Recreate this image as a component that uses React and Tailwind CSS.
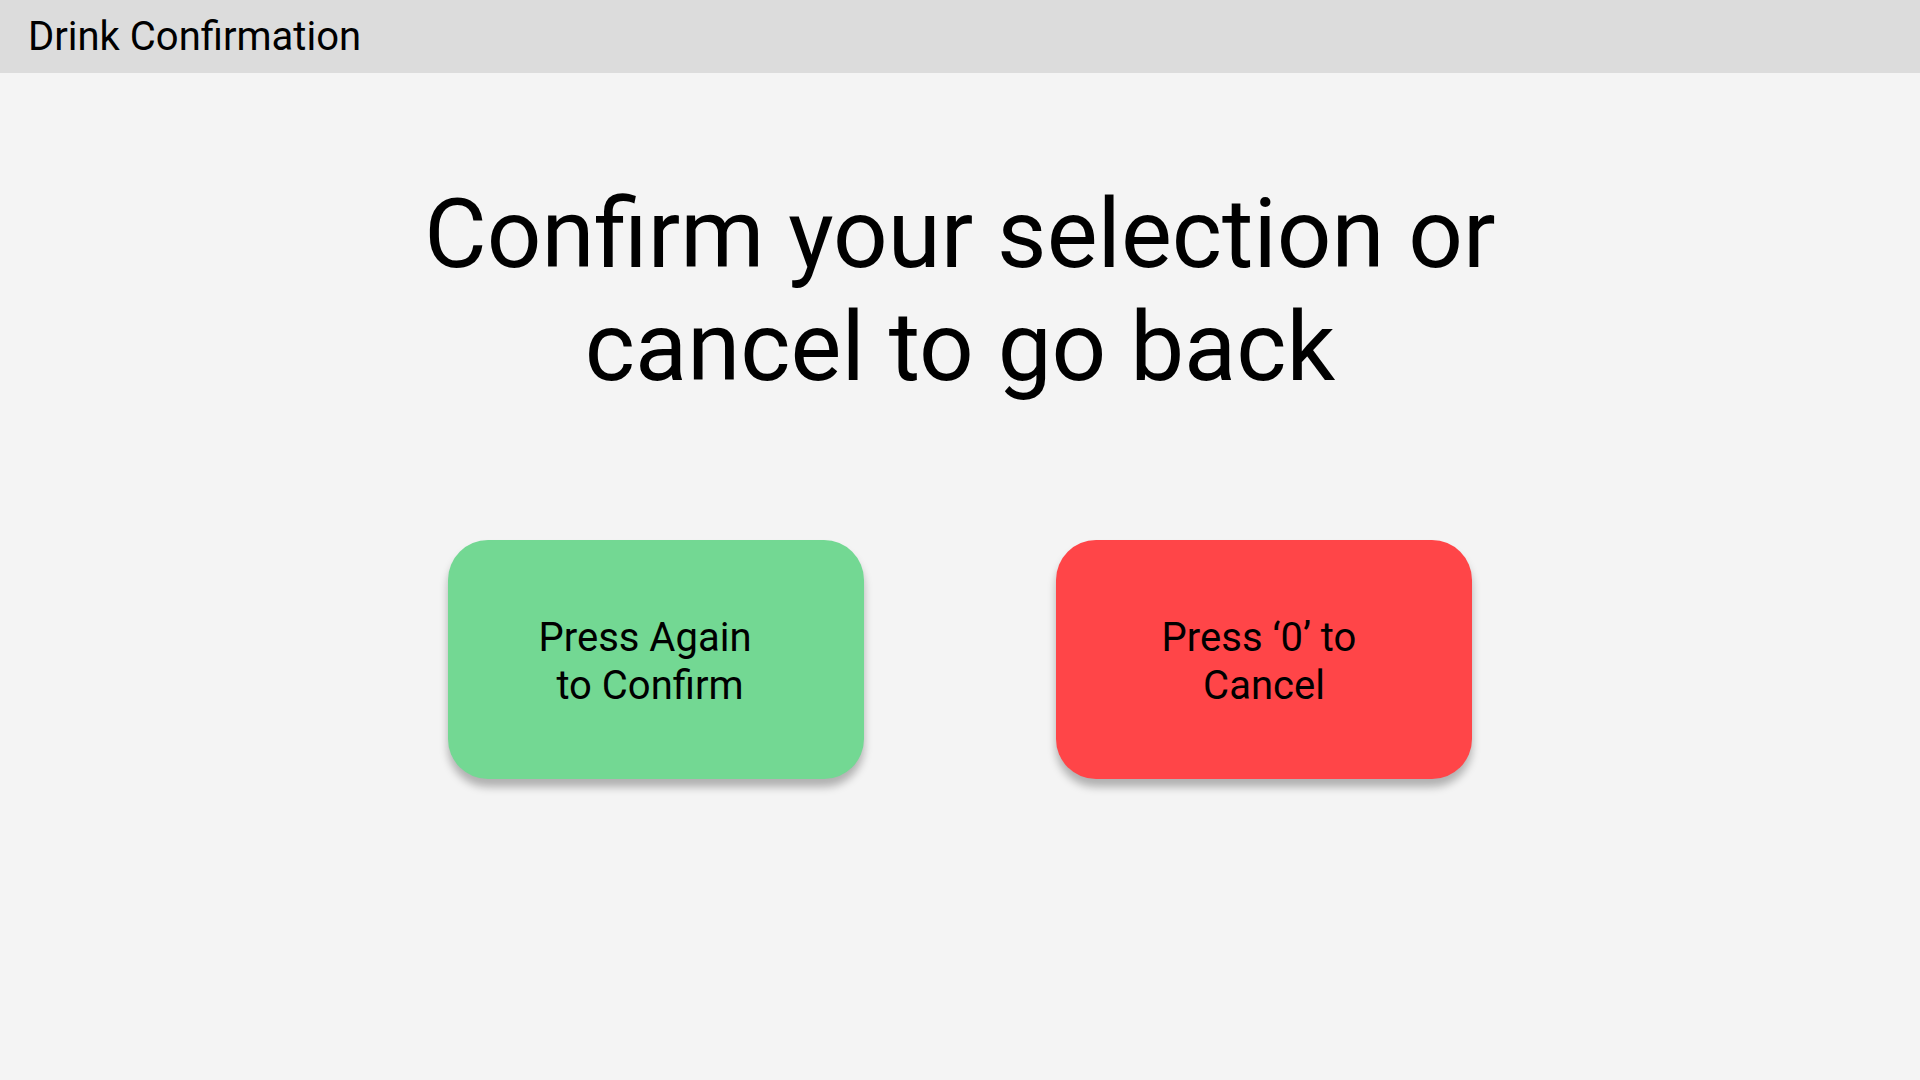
import React from 'react';

// --- Choice button ---
const ChoiceButton = ({ children, className = "" }) => (
  <button
    className={`w-[416px] h-[239px] pt-[5px] rounded-[40px] flex flex-col items-center justify-center text-center text-[40px] leading-[48px] text-black shadow-[0_8px_8px_rgba(0,0,0,0.28)] ${className}`}
  >
    {children}
  </button>
);

const App = () => {
  return (
    <div className="min-h-screen w-full bg-[#f4f4f4] font-['Roboto',sans-serif] text-black">
      {/* Header */}
      <header className="h-[73px] bg-[#dcdcdc] flex items-center pl-[28px]">
        <h1 className="text-[40px] leading-none">Drink Confirmation</h1>
      </header>

      <main className="flex flex-col items-center">
        <h2 className="mt-[105px] text-[96px] leading-[113px] text-center">
          Confirm your selection or
          <br />
          cancel to go back
        </h2>

        <div className="mt-[136px] flex gap-[192px]">
          <ChoiceButton className="bg-[#73d893]">
            <span className="block pr-[22px]">Press Again</span>
            <span className="block pr-[12px]">to Confirm</span>
          </ChoiceButton>
          <ChoiceButton className="bg-[#ff4548]">
            <span className="block pr-[10px]">Press ‘0’ to</span>
            <span className="block">Cancel</span>
          </ChoiceButton>
        </div>
      </main>
    </div>
  );
};

export default App;
